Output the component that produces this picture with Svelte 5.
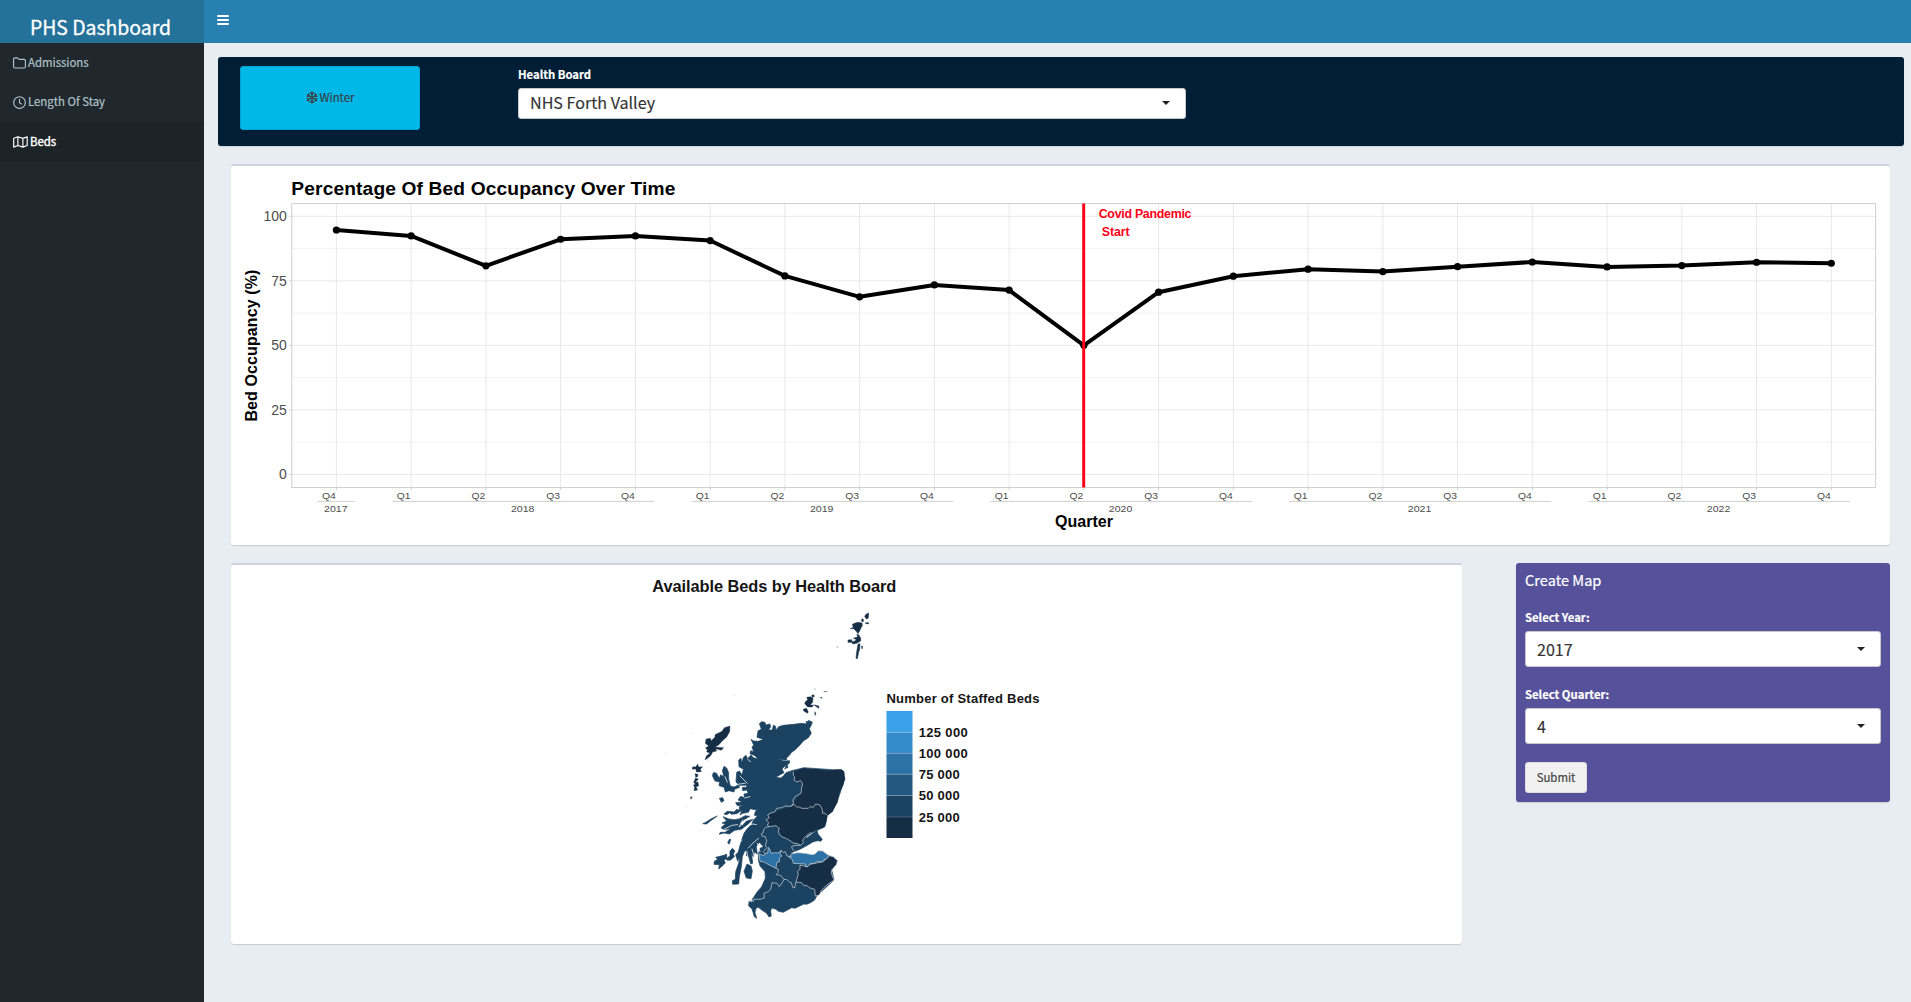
<script>
  const x0 = 336.4, step = 74.745;
  const px = (i) => x0 + i * step;
  const py = (v) => 474.4 - v * 2.581;
  const values = [94.7, 92.4, 80.8, 91.1, 92.4, 90.6, 76.9, 68.8, 73.4, 71.4, 50, 70.6, 76.8, 79.5, 78.6, 80.5, 82.3, 80.4, 80.9, 82.2, 81.8];
  const line = values.map((v, i) => `${px(i)},${py(v)}`).join(' ');
  const quarter = (i) => 'Q' + (((i + 3) % 4) + 1);
  const years = [
    { name: '2017', from: 0, to: 0 },
    { name: '2018', from: 1, to: 4 },
    { name: '2019', from: 5, to: 8 },
    { name: '2020', from: 9, to: 12 },
    { name: '2021', from: 13, to: 16 },
    { name: '2022', from: 17, to: 20 }
  ];
  const legend = [
    { y: 711, h: 21.3, fill: '#3aa1e8' },
    { y: 732.3, h: 21, fill: '#358bc9' },
    { y: 753.3, h: 21, fill: '#2c72a7' },
    { y: 774.3, h: 21.2, fill: '#235981' },
    { y: 795.5, h: 21.5, fill: '#1b4260' },
    { y: 817, h: 21, fill: '#152e46' }
  ];
  const breaks = [
    { t: '125 000', y: 737, w: 49 },
    { t: '100 000', y: 758, w: 49 },
    { t: '75 000', y: 779, w: 41 },
    { t: '50 000', y: 800, w: 41 },
    { t: '25 000', y: 821.8, w: 41 }
  ];
</script>

<div class="app">
  <aside class="sidebar">
    <div class="logo">PHS Dashboard</div>
    <nav>
      <a class="item">
        <svg width="13" height="12" viewBox="0 0 13 12"><path d="M.6 2Q.6.8 1.8.8H4.4L6 2.4H11.2Q12.4 2.4 12.4 3.6V9.8Q12.4 11 11.2 11H1.8Q.6 11 .6 9.8Z" /></svg>
        <span>Admissions</span>
      </a>
      <a class="item">
        <svg width="13" height="13" viewBox="0 0 13 13"><circle cx="6.5" cy="6.5" r="5.8" /><path d="M6.5 3V6.8L8.7 8.2" /></svg>
        <span>Length Of Stay</span>
      </a>
      <a class="item active">
        <svg width="15" height="12" viewBox="0 0 15 12"><path d="M.7 2.3V11.1L4.9 9.5L9.9 11.1L14.2 9.5V.9L9.9 2.4L4.9.8ZM4.9.8V9.5M9.9 2.4V11.1" /></svg>
        <span>Beds</span>
      </a>
    </nav>
  </aside>

  <div class="main">
    <header><span class="bars"><i></i><i></i><i></i></span></header>

    <section class="filters">
      <button class="winter">
        <svg width="12" height="13" viewBox="-6 -6.5 12 13">
          {#each [0, 60, 120, 180, 240, 300] as a}
            <path transform="rotate({a})" d="M0 0V-6M-1.9-5L0-3.2L1.9-5" />
          {/each}
        </svg>
        <span>Winter</span>
      </button>
      <div class="board">
        <label class="lbl">Health Board</label>
        <div class="select wide"><span>NHS Forth Valley</span><b class="caret"></b></div>
      </div>
    </section>

    <section class="card chart">
      <svg viewBox="231 166 1659 379" width="1659" height="379">
        <text class="title" x="291.3" y="195" font-size="19.2" textLength="384">Percentage Of Bed Occupancy Over Time</text>
        {#each [12.5, 37.5, 62.5, 87.5] as v}
          <path d="M292 {py(v)}H1875.5" stroke="#f3f3f3" />
        {/each}
        {#each [0, 25, 50, 75, 100] as v}
          <path d="M292 {py(v)}H1875.5" stroke="#e8e8e8" />
          <path d="M289 {py(v)}H292" stroke="#d0d0d0" />
          <text class="tick" x="286.8" y={py(v) + 4.9} text-anchor="end" font-size="14">{v}</text>
        {/each}
        {#each values as v, i}
          <path d="M{px(i)} 203.5V487.5" stroke="#e8e8e8" />
          <path d="M{px(i)} 487.5V490" stroke="#d0d0d0" />
          <text class="tick" x={px(i) - 7.5} y="498.7" text-anchor="middle" font-size="9.8" textLength="13.8" lengthAdjust="spacingAndGlyphs">{quarter(i)}</text>
        {/each}
        <rect x="291.8" y="203.5" width="1583.8" height="284" fill="none" stroke="#d0d0d0" />
        {#each years as g}
          <path d="M{px(g.from - 0.25)} 501.4H{px(g.to + 0.25)}" stroke="#cfcfcf" />
          <text class="tick" x={px((g.from + g.to) / 2) - 0.6} y="511.7" text-anchor="middle" font-size="9.8" textLength="23.5" lengthAdjust="spacingAndGlyphs">{g.name}</text>
        {/each}
        <polyline points={line} fill="none" stroke="#000" stroke-width="4" stroke-linejoin="round" />
        {#each values as v, i}
          <circle cx={px(i)} cy={py(v)} r="3.6" />
        {/each}
        <path d="M1083.7 203.5V487.5" stroke="#ff0018" stroke-width="3" />
        <text class="covid" x="1098.7" y="218" textLength="92.8">Covid Pandemic</text>
        <text class="covid" x="1101.7" y="236" textLength="28">Start</text>
        <text class="title" transform="translate(257 421.6) rotate(-90)" font-size="16" textLength="152">Bed Occupancy (%)</text>
        <text class="title" x="1055" y="527" font-size="16" textLength="58">Quarter</text>
      </svg>
    </section>

    <div class="lower">
      <section class="card map">
        <svg viewBox="231 565 1231 378.5" width="1231" height="378.5">
          <text class="mtitle" x="652.3" y="592.3" font-size="16.4" textLength="244">Available Beds by Health Board</text>
          <g transform="translate(650 670) scale(.33333)">
            <path fill="#1b4260" stroke="#1b4260" stroke-width="2" d="M335 155L345 157 347 165 360 162 362 170 356 180 367 180 370 166 376 168 378 180 386 170 400 166 430 163 455 160 470 162 468 154 476 156 475 151 487 156 484 165 478 176 484 190 475 203 460 213 450 225 435 240 425 247 417 257 409 265 411 269 402 270 384 266 401 273 419 272 418 280 412 284 414 292 404 297 410 283 396 297 402 308 377 322 392 324 400 318 408 308 425 302 462 293 560 300 585 325 560 400 532 437 525 470 500 482 484 488 466 503 472 503 488 490 502 482 504 492 517 508 512 514 503 512 490 515 470 527 450 538 432 545 420 549 440 555 537 557 562 572 545 600 552 630 500 678 494 690 480 699 470 703 462 702 435 715 425 713 400 727 385 724 378 718 365 714 362 723 364 738 357 741 350 730 335 720 325 712 318 715 315 727 320 745 313 740 306 717 296 708 297 694 306 697 307 688 322 665 335 650 346 625 345 605 330 588 325 570 326 550 330 535 340 530 328 517 319 530 322 553 314 545 310 560 305 552 308 580 302 582 296 560 289 557 290 540 283 545 277 560 274 590 268 620 266 642 248 643 247 632 256 628 257 605 266 580 270 562 263 574 257 554 265 546 269 530 275 510 282 490 291 477 305 463 310 451 322 438 313 436 317 420 301 416 295 427 278 430 270 435 276 421 260 431 244 433 240 428 230 434 222 432 232 424 252 426 260 418 268 421 268 410 283 405 262 407 257 398 277 396 264 390 272 379 283 383 282 372 294 370 291 360 278 362 277 352 290 352 290 346 266 346 258 335 260 307 268 303 276 314 280 298 267 290 266 270 273 265 275 278 281 261 288 256 293 266 303 255 310 263 324 266 315 257 300 251 302 242 311 245 306 232 311 225 303 208 311 213 325 214 340 208 321 202 324 183 334 177 328 161Z" />
            <path fill="#1b4260" stroke="#1b4260" stroke-width="2" d="M222 289L230 294 236 308 236 327 241 348 252 351 265 345 269 352 254 358 252 366 237 362 226 366 222 352 207 347 209 336 195 333 187 317 190 308 199 309 208 325 212 314 222 320 217 302ZM208 385L218 383 222 392 214 397ZM219 440L237 447 254 449 269 446 286 437 301 439 284 448 270 459 276 468 288 454 309 448 292 465 274 478 254 481 238 492 222 489 208 493 211 487 225 487 242 476 222 479 213 473 226 462 216 459 230 453ZM158 461L170 462 181 453 202 438 184 446 167 457ZM238 508L242 508 238 522 233 519ZM240 544L247 535 255 543 250 551 253 560 242 570 232 571 228 567 240 557ZM222 556L230 552 230 565 222 571 226 578 218 587 206 597 208 584 192 583 193 574 203 568 197 562ZM291 582L303 588 307 603 303 626 289 624 282 604Z" />
            <path fill="#152e46" stroke="#152e46" d="M240 168L239 185 230 201 216 214 207 224 196 231 221 233 214 241 197 236 200 243 188 246 183 256 175 263 165 270 169 258 180 249 170 246 172 239 166 234 176 228 166 220 168 207 181 205 184 212 195 201 195 194 216 184 223 173ZM128 290L137 291 143 282 146 291 158 290 151 298 154 305 139 306 138 297 127 298ZM135 311L144 313 143 320 137 321ZM137 323L145 328 136 337 144 336 146 348 138 350 143 360 132 362 134 351 130 345 136 343 131 337ZM121 382L127 380 123 388ZM466 95L473 89 470 82 482 80 489 84 488 97 481 104 490 106 487 111 473 111 464 101ZM485 76L492 74 493 80 487 82ZM460 117L470 115 475 126 472 130 461 123ZM491 104L507 108 506 115 499 110ZM494 125L498 130 495 137Z" />
            <g stroke="#fff" stroke-width="2.2" fill="none" stroke-linecap="round">
              <path d="M318 420L305 435 292 447 280 460 267 471 278 450M263 497L272 484 290 468 309 462 319 464M266 520L276 511M326 505L309 519 295 534M222 478L246 466 263 464M293 268L302 275M270 318L292 340M246 345L285 340M284 384L300 380M225 320L232 337M291 545L295 580M306 537L316 570M322 520L330 545" />
            </g>
            <g stroke="#c5ccd2" stroke-width="2.2" stroke-linejoin="round">
              <path fill="#152e46" stroke="none" d="M430 304L445 301 462 293 469 298 500 297 520 302 540 302 560 298 575 298 583 305 585 325 580 345 567 370 563 395 548 425 532 437 528 460 520 473 500 478 484 488 462 502 460 518 450 525 430 515 400 505 387 490 385 472 360 470 350 450 360 430 423 410 452 370 458 342 432 330Z" />
              <path fill="#1b4260" stroke="none" d="M335 492L340 480 355 470 378 467 390 477 385 490 400 503 420 512 430 521 422 538 390 543 350 530Z" />
              <path fill="none" d="M430 305L430 316 434 320 432 330 440 336 452 332 458 342 455 352 453 370 435 380 429 390 430 400 423 409M532 437L525 430 518 430 517 419 510 405 497 402 490 412 480 410 475 415 455 415 448 411 440 411 432 403 423 409 405 408 395 413 380 415 375 425 360 430 353 435 358 444 348 449 356 458 352 466 358 470 378 467 388 475 385 483 388 494 397 501 410 506 420 512 430 519 445 522 452 526 460 518 458 510 466 500 482 487M358 470L347 472 341 480 339 489 334 491 336 498 346 500 350 514 346 525 350 533M452 526L438 526 425 529 427 537 435 545" />
              <path fill="#152e46" d="M537 557L550 560 562 572 560 583 545 600 544 610 552 630 530 645 515 660 508 675 496 678 494 658 478 653 468 645 463 648 455 638 438 636 445 612 442 605 450 598 450 585 470 590 480 583 520 575Z" />
              <path fill="#2c72a7" d="M417 562L425 552 442 548 465 550 486 554 495 552 505 542 518 543 537 557 532 565 520 570 515 576 502 574 492 580 480 581 474 590 468 590 466 582 430 580 427 568ZM355 532L359 537 363 550 374 548 384 549 394 541 390 552 396 558 388 564 388 575 380 578 378 595 360 586 344 577 330 574 327 552 342 557 347 549 353 550Z" />
              <path fill="none" d="M350 533L340 545 345 551M394 541L400 548 406 545 411 558 425 560M378 595L385 598 384 608 378 614 392 616 402 628 411 629 418 636 424 638 428 652 434 654 438 636M402 628L396 639 388 650 381 640 366 638 362 658 353 666 342 670 343 684 330 688 312 687 309 696M296 694L309 691" />
            </g>
            <g fill="#dfe4e8"><path d="M40 254L52 244 50 249ZM104 412L112 405 109 411ZM248 76H254V78H248ZM170 268L177 272 173 276ZM122 188H132V190H122ZM142 484L152 481V483Z" /></g>
          </g>
          <g transform="translate(780 590) scale(.33333)">
            <path fill="#152e46" stroke="#152e46" stroke-width="1.5" d="M217 103L226 99 235 97 246 99 247 107 243 113 240 121 234 131 229 124 221 116 211 116 220 112ZM246 86L251 89 249 96 244 93ZM258 73L266 69 265 84 259 87 254 79ZM257 98H266V101H257ZM204 150L215 149 216 155 226 153 228 147 220 145 234 140 230 134 236 134 242 144 242 153 230 160 219 162 214 157 204 157ZM234 163L240 161 239 177 236 187 232 206 228 205 230 186ZM244 169L248 169 246 177Z" />
            <path fill="#4f6274" d="M169 170H176V172H169ZM101 294L106 297 108 301ZM131 303H142V305H131ZM118 304L127 307ZM119 321L127 321 126 327Z" />
          </g>
          <text class="mtitle" x="886.5" y="703.3" font-size="13" textLength="153">Number of Staffed Beds</text>
          {#each legend as l}
            <rect x="886.5" y={l.y} width="26" height={l.h} fill={l.fill} />
          {/each}
          {#each legend.slice(1) as l}
            <path d="M886.5 {l.y}H912.5" stroke="#fff" stroke-opacity=".18" />
          {/each}
          {#each breaks as b}
            <text class="mtitle" x="918.7" y={b.y} font-size="13" textLength={b.w}>{b.t}</text>
          {/each}
        </svg>
      </section>

      <section class="create">
        <h3>Create Map</h3>
        <label class="lbl">Select Year:</label>
        <div class="select"><span>2017</span><b class="caret"></b></div>
        <label class="lbl next">Select Quarter:</label>
        <div class="select"><span>4</span><b class="caret"></b></div>
        <button class="submit"><span>Submit</span></button>
      </section>
    </div>
  </div>
</div>

<style>
  :global(body) { background: #e8edf1; overflow: hidden; }
  * { box-sizing: border-box; }
  .app { display: flex; width: 1911px; height: 1002px; background: #e8edf1; font-family: "Noto Sans CJK SC", "Noto Sans", sans-serif; font-size: 11.4px; line-height: 18px; color: #333; }
  svg { display: block; flex: none; }
  .sidebar { width: 204px; background: #20282e; }
  .logo { height: 43px; padding: 13px 3px 0 0; line-height: 28px; text-align: center; color: #fff; font-size: 19.4px; background: #24719a; -webkit-text-stroke: .3px; }
  .item { display: flex; align-items: center; height: 39.5px; padding-left: 13px; gap: 2px; color: #b0c2c9; }
  .item span { padding-bottom: 1.6px; -webkit-text-stroke: .2px; }
  .winter span { padding-bottom: 1px; -webkit-text-stroke: .2px; }
  .item.active { height: 40px; padding-bottom: 1px; background: #1d2427; color: #fff; }
  .item.active span { -webkit-text-stroke: .4px; }
  .item svg { fill: none; stroke: currentColor; stroke-width: 1.15; stroke-linejoin: round; }
  .main { flex: 1; min-width: 0; display: flex; flex-direction: column; }
  header { height: 43px; background: #2780b0; padding: 15px 0 0 13px; }
  .bars { display: flex; flex-direction: column; gap: 2px; width: 12px; }
  .bars i { height: 2px; background: #fff; border-radius: 1px; }
  .filters { display: flex; align-items: flex-start; margin: 14px 7px 0 14px; height: 89px; padding: 9px 22px; background: #001e35; border-radius: 3px; box-shadow: 0 1px 1px rgba(0, 0, 0, .1); }
  button { font: inherit; padding: 0; }
  .winter { display: flex; align-items: center; justify-content: center; gap: 2px; width: 180px; height: 64px; padding-bottom: 1px; background: #00b8e8; border: 1px solid #00a3d4; border-radius: 3px; color: #3a4246; }
  .winter svg { fill: none; stroke: #3a4246; stroke-width: 1.35; }
  .board { margin-left: 98px; width: 668px; }
  .lbl { display: block; color: #fff; font-weight: 700; font-size: 11.3px; line-height: 16px; padding-bottom: 2px; -webkit-text-stroke: .2px; }
  .select { display: flex; align-items: center; justify-content: space-between; height: 36px; padding: 0 15px 0 11px; background: #fff; border: 1px solid #c8c8cc; border-radius: 3px; font-size: 16.1px; line-height: 24px; color: #333; }
  .select span { -webkit-text-stroke: .15px; }
  .create .caret { margin-bottom: 1px; }
  .wide { height: 31px; margin-top: 4px; }
  .wide span { padding-bottom: 3px; }
  .wide .caret { margin-bottom: 1px; }
  .caret { width: 0; height: 0; border: 4.5px solid transparent; border-top-color: #222; border-bottom: 0; }
  .card { background: #fff; border-top: 2px solid #cdd2dc; border-radius: 3px; box-shadow: 0 1px 1px rgba(0, 0, 0, .14); }
  .chart { margin: 18px 0 0 27px; width: 1659px; height: 381px; }
  .lower { display: flex; align-items: flex-start; justify-content: space-between; margin: 18px 21px 0 27px; }
  .map { width: 1231px; height: 380.5px; }
  .create { width: 374px; height: 239px; padding: 6px 9px 0; background: #55519a; border-radius: 3px; box-shadow: 0 1px 1px rgba(0, 0, 0, .12); }
  h3 { margin: 0 0 18px; color: #fff; font-weight: 400; font-size: 14.6px; line-height: 22px; -webkit-text-stroke: .2px; }
  .create .lbl { margin-bottom: 4px; }
  .create .next { margin-top: 19px; }
  .submit { display: block; width: 62px; height: 31px; padding-bottom: 2px; margin-top: 18px; background: #f1f1f1; border: 1px solid #ddd; border-radius: 3px; color: #444; -webkit-text-stroke: .2px; }
  text { font-family: "Liberation Sans", Arial, sans-serif; }
  .title { font-weight: 700; fill: #000; }
  .tick { fill: #4d4d4d; }
  .covid { fill: #ff0018; font-weight: 700; font-size: 12.4px; }
  .mtitle { font-weight: 700; fill: #151515; }
</style>
